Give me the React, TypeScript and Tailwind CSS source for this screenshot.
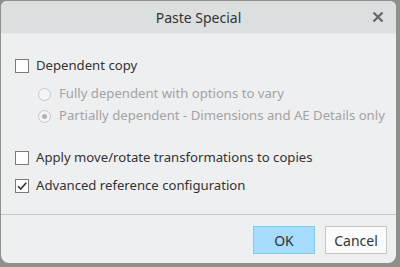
import React from "react";

const Checkbox: React.FC<{ checked?: boolean }> = ({ checked }) => (
    <div className="w-[14px] h-[14px] border border-[#7a7a7a] bg-white flex items-center justify-center shrink-0">
        {checked && (
            <svg width="12" height="12" viewBox="0 0 12 12">
                <path d="M2 6.2 L4.8 9 L10.2 2.8" fill="none" stroke="#333" strokeWidth="1.6" />
            </svg>
        )}
    </div>
);

const Radio: React.FC<{ checked?: boolean }> = ({ checked }) => (
    <div className="w-[13px] h-[13px] rounded-full border border-[#c8c8c8] bg-[#f4f4f4] flex items-center justify-center shrink-0">
        {checked && <div className="w-[5px] h-[5px] rounded-full bg-[#b4b4b4]" />}
    </div>
);

export default function App() {
    return (
        <div className="w-[400px] h-[267px] bg-[#8e908b] pl-px pt-px font-['Noto_Sans',sans-serif]">
            <div className="w-[395px] h-[262px] rounded-t-[6px] rounded-b-[8px] bg-[#eeeff1] flex flex-col overflow-hidden">
                <div className="h-[33px] bg-[#dcdfe0] flex items-center justify-center relative border-b border-[#e6e8ea]">
                    <span className="text-[14px] text-[#333]">Paste Special</span>
                    <span className="absolute right-[12px] top-[10px]">
                        <svg width="12" height="12" viewBox="0 0 12 12">
                            <path d="M1.5 1.5 L10.5 10.5 M10.5 1.5 L1.5 10.5" stroke="#666" strokeWidth="2.3" />
                        </svg>
                    </span>
                </div>
                <div className="flex-1 flex flex-col pl-[14px] pt-[24px] text-[13.15px] text-[#333]">
                    <div className="flex items-center gap-[7px] h-[16px]">
                        <Checkbox />
                        <span>Dependent copy</span>
                    </div>
                    <div className="flex flex-col pl-[23px] pt-[12px] gap-[6px] text-[#a3a3a3]">
                        <div className="flex items-center gap-[8px] h-[16px]">
                            <Radio />
                            <span>Fully dependent with options to vary</span>
                        </div>
                        <div className="flex items-center gap-[8px] h-[16px]">
                            <Radio checked />
                            <span>Partially dependent - Dimensions and AE Details only</span>
                        </div>
                    </div>
                    <div className="flex items-center gap-[7px] h-[16px] mt-[26px]">
                        <Checkbox />
                        <span>Apply move/rotate transformations to copies</span>
                    </div>
                    <div className="flex items-center gap-[7px] h-[16px] mt-[12px]">
                        <Checkbox checked />
                        <span>Advanced reference configuration</span>
                    </div>
                </div>
                <div className="h-[49px] border-t border-[#c7c9cb] flex items-start justify-end gap-[10px] pr-[9px] pt-[11px]">
                    <button className="w-[62px] h-[28px] bg-[#a6dcfd] border border-[#7ecaf5] text-[14px] text-[#333]">
                        OK
                    </button>
                    <button className="w-[62px] h-[28px] bg-[#fbfbfb] border border-[#c4c4c4] text-[14px] text-[#333]">
                        Cancel
                    </button>
                </div>
            </div>
        </div>
    );
}
